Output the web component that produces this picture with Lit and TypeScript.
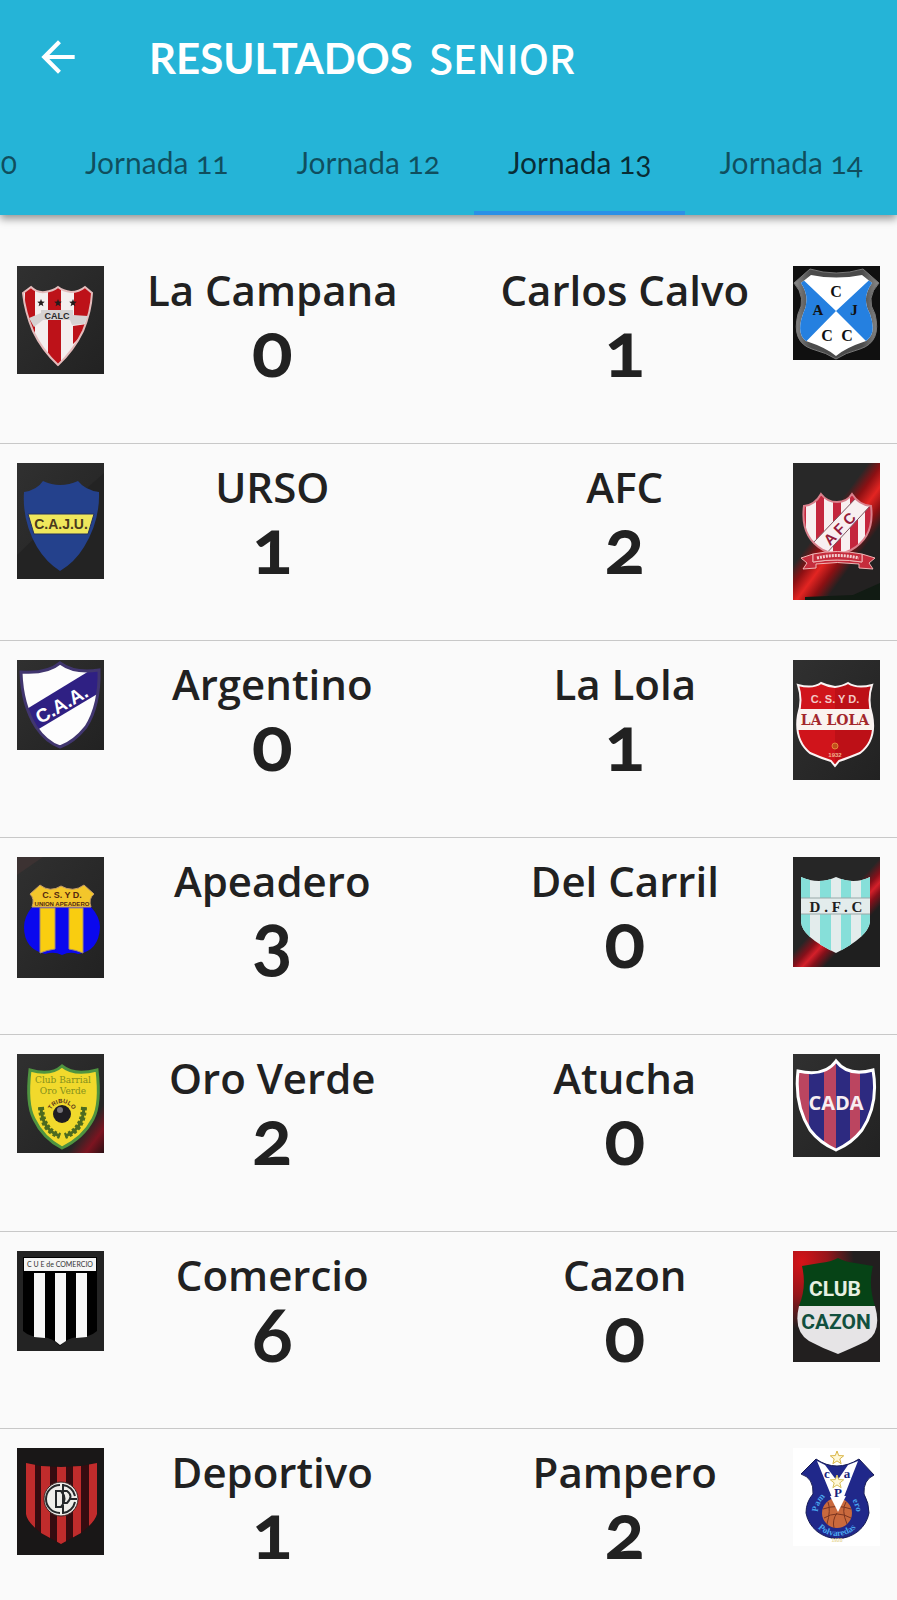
import { LitElement, html, svg, css, type SVGTemplateResult } from "lit";
import { customElement, property, state } from "lit/decorators.js";

interface Crest { height: number; art: SVGTemplateResult; }
interface Team { name: string; goals: number; crest: Crest; }

const SANS = "Liberation Sans, sans-serif";
const SERIF = "Liberation Serif, serif";

const bars = (list: number[][], fill: string, y = 0, h = 140) =>
  list.map(([x, w]) => svg`<rect x=${x} y=${y} width=${w} height=${h} fill=${fill} />`);

const label = (text: string, x: number, y: number, size: number, fill: string, family = SANS, weight = 700) =>
  svg`<text x=${x} y=${y} font-size=${size} fill=${fill} font-family=${family} font-weight=${weight} text-anchor="middle">${text}</text>`;

const backdrop = (id: string, h: number) => svg`
  <defs><linearGradient id=${id} x1="0" y1="0" x2="1" y2="1">
    <stop offset="0" stop-color="#303030" /><stop offset="1" stop-color="#222222" />
  </linearGradient></defs>
  <rect width="87" height=${h} fill="url(#${id})" />`;

const star = (cx: number, cy: number, r: number) =>
  Array.from({ length: 10 }, (_, i) => {
    const a = (i * Math.PI) / 5 - Math.PI / 2;
    const q = i % 2 ? r * 0.42 : r;
    return `${(cx + q * Math.cos(a)).toFixed(1)},${(cy + q * Math.sin(a)).toFixed(1)}`;
  }).join(" ");

const campanaShape = "M6 27 L14 21 Q20 27 28 26 Q36 25 41 21 Q46 25 54 26 Q62 26 68 21 L75 27 Q74 46 66 65 Q57 84 41 99 Q25 84 16 65 Q8 46 6 27Z";
const campana: Crest = { height: 108, art: svg`
  ${backdrop("bgCampana", 108)}
  <clipPath id="clipCampana"><path d=${campanaShape} /></clipPath>
  <g clip-path="url(#clipCampana)">
    <rect width="87" height="108" fill="#f4eeee" />
    ${bars([[8, 10], [31, 13]], "#bd1219")}
    <path d="M57 26 L68 18 L78 24 L74 50 L57 50Z M56 60 L70 58 L62 72 L56 78Z" fill="#bd1219" />
  </g>
  <path d=${campanaShape} fill="none" stroke="#e3bcbc" stroke-width="2" />
  ${[24, 41, 56].map((x) => svg`<polygon points=${star(x, 37, 4)} fill="#241c1c" />`)}
  <path d="M12 52 L24 47 L24 44 L56 44 L56 49 L71 50 L67 58 L55 59 L53 54 L26 54 L17 61Z" fill="#d6d2d2" />
  ${label("CALC", 40, 53, 9, "#28282a")}` };

const calvo: Crest = { height: 94, art: svg`
  <rect width="87" height="94" fill="#101010" />
  <linearGradient id="steel"><stop offset="0" stop-color="#8b8b8b" /><stop offset=".2" stop-color="#4b4b4b" /><stop offset=".8" stop-color="#4b4b4b" /><stop offset="1" stop-color="#8b8b8b" /></linearGradient>
  <path d="M17 3 Q43 11 70 3 L86 17 Q72 32 82 48 Q89 76 67 83 Q52 87 43 93 Q34 87 19 83 Q-2 76 5 48 Q14 32 1 17Z" fill="url(#steel)" stroke="#777" stroke-width="1" />
  <clipPath id="clipCalvo"><path d="M18 9 Q43 14 69 9 L79 17 Q68 32 77 48 Q84 68 73 75 Q52 82 43 90 Q34 82 13 75 Q3 68 10 48 Q18 32 8 17Z" /></clipPath>
  <g clip-path="url(#clipCalvo)">
    <rect width="87" height="94" fill="#ffffff" />
    <path d="M0 4 L43 45 L0 89Z M87 4 L43 45 L87 89Z" fill="#2580e0" />
  </g>
  ${label("C", 43, 31, 16, "#111", SERIF)}${label("A", 25, 49, 15, "#111", SERIF)}${label("J", 61, 49, 15, "#111", SERIF)}
  ${label("C", 34, 75, 16, "#111", SERIF)}${label("C", 54, 75, 16, "#111", SERIF)}` };

const urso: Crest = { height: 116, art: svg`
  ${backdrop("bgUrso", 116)}
  <path d="M87 10 L60 34 L0 92 L0 116 L87 116Z" fill="#232323" />
  <path d="M7 29 Q20 27 26 18 Q43 26 61 18 Q68 27 82 29 Q83 58 67 84 Q58 99 43 108 Q29 99 20 84 Q5 58 7 29Z" fill="#24418c" />
  <path d="M11 51 L77 51 L71 71 L17 71Z" fill="#efe75c" stroke="#25305a" stroke-width="1" />
  ${label("C.A.J.U.", 44, 66, 14, "#4a3a1c")}` };

const argShape = "M4 12 Q30 14 43 3 Q58 14 82 10 Q83 45 69 67 Q57 82 43 87 Q29 82 19 67 Q5 45 4 12Z";
const argentino: Crest = { height: 90, art: svg`
  ${backdrop("bgArgentino", 90)}
  <clipPath id="clipArg"><path d=${argShape} /></clipPath>
  <g clip-path="url(#clipArg)">
    <rect width="87" height="90" fill="#fdfdfd" />
    <path d="M0 55 L87 2 L87 30 L10 76Z" fill="#2f2083" />
  </g>
  <path d=${argShape} fill="none" stroke="#41366f" stroke-width="3" />
  <g transform="translate(48 50) rotate(-30)">${label("C.A.A.", 0, 0, 19, "#ffffff")}</g>` };

const afcShape = "M11 43 Q22 42 28 31 Q34 39 44 39 Q54 39 59 31 Q66 42 78 43 Q82 74 58 87 L44 93 L30 87 Q7 74 11 43Z";
const afc: Crest = { height: 137, art: svg`
  <linearGradient id="beamAfc" gradientUnits="userSpaceOnUse" x1="28" y1="64" x2="66" y2="92">
    <stop offset="0" stop-color="#282828" /><stop offset=".25" stop-color="#8c1013" /><stop offset=".5" stop-color="#e32522" /><stop offset=".75" stop-color="#8c1013" /><stop offset="1" stop-color="#232121" />
  </linearGradient>
  <rect width="87" height="137" fill="url(#beamAfc)" />
  <path d="M12 134 L60 132 L87 120 L87 137 L12 137Z" fill="#111b13" />
  <clipPath id="clipAfc"><path d=${afcShape} /></clipPath>
  <g clip-path="url(#clipAfc)">
    <rect width="87" height="137" fill="#f8eff0" />
    ${bars([[23, 8], [40, 8], [57, 8], [72, 6], [10, 3]], "#c4263d")}
    <path d="M20 80 L64 34 L77 43 L31 93Z" fill="#f8eff0" stroke="#7c5560" stroke-width="1" />
  </g>
  <path d=${afcShape} fill="none" stroke="#d9808c" stroke-width="2" />
  <g transform="translate(49 68) rotate(-46)">${label("A F C", 0, 2, 15, "#941b3b")}</g>
  <path d="M8 95 L20 91 L20 99 Q44 95 69 99 L69 91 L82 95 L76 100 L80 106 L66 105 L66 101 Q44 98 23 101 L23 105 L10 106 L14 100Z" fill="#c52c3c" stroke="#f0b5b5" stroke-width="1" />
  <path d="M20 91 Q44 86 69 91 L69 99 Q44 95 20 99Z" fill="#c52c3c" stroke="#f0b5b5" stroke-width="1" />
  <path d="M24 95 Q44 90 66 95" fill="none" stroke="#f3d0d0" stroke-width="3" stroke-dasharray="2 1" />` };

const lolaShape = "M5 25 Q20 29 28 23 Q34 26 42 27 Q50 26 55 23 Q64 29 79 25 Q74 40 79 55 Q84 80 67 93 Q55 98 46 101 L42 106 L38 101 Q28 98 17 93 Q1 80 5 55 Q10 40 5 25Z";
const lola: Crest = { height: 120, art: svg`
  ${backdrop("bgLola", 120)}
  <clipPath id="clipLola"><path d=${lolaShape} /></clipPath>
  <g clip-path="url(#clipLola)">
    <rect width="87" height="120" fill="#d0141b" /><rect x="42" width="45" height="120" fill="#bd1017" />
    <rect y="49" width="87" height="21" fill="#faf3ef" />
  </g>
  <path d=${lolaShape} fill="none" stroke="#faf3f3" stroke-width="2" />
  ${label("C. S. Y D.", 42, 43, 11, "#f3c9c6")}
  ${label("LA LOLA", 42, 65, 14, "#a3272b", "DejaVu Serif, serif")}
  <circle cx="42" cy="86" r="3" fill="#c0501c" stroke="#e5853c" stroke-width="1" />
  ${label("1932", 42, 97, 6, "#f0b48f")}` };

const apeadero: Crest = { height: 121, art: svg`
  ${backdrop("bgApeadero", 121)}
  <path d="M0 0 L26 0 L0 18Z" fill="#3c3232" />
  <path d="M15 50 L74 50 Q83 60 83 70 Q82 94 61 97 Q53 94 45 98 Q37 94 28 97 Q7 92 7 70 Q7 60 15 50Z" fill="#0a08ee" />
  <path d="M23 51 H38 V92 Q30 93 23 96Z M52 51 H66 V96 Q59 93 52 92Z" fill="#f9cd10" stroke="#a08a78" stroke-width="1" />
  <path d="M13 37 L23 28 Q33 36 44 29 Q56 36 67 28 L77 37 Q71 42 74 50 L15 50 Q18 42 13 37Z" fill="#f3c62b" stroke="#c39a66" stroke-width="1" />
  ${label("C. S. Y D.", 45, 41, 9, "#54280f")}
  ${label("UNION APEADERO", 45, 49, 6, "#54280f")}` };

const dfcShape = "M8 20 Q26 28 43 20 Q61 28 77 20 L77 65 Q75 80 43 96 Q9 80 8 65Z";
const carril: Crest = { height: 110, art: svg`
  <linearGradient id="beamDfc" gradientUnits="userSpaceOnUse" x1="42" y1="50" x2="66" y2="72">
    <stop offset="0" stop-color="#262626" /><stop offset=".3" stop-color="#86101a" /><stop offset=".5" stop-color="#d4202a" /><stop offset=".7" stop-color="#86101a" /><stop offset="1" stop-color="#1f1f1f" />
  </linearGradient>
  <rect width="87" height="110" fill="url(#beamDfc)" />
  <clipPath id="clipDfc"><path d=${dfcShape} /></clipPath>
  <g clip-path="url(#clipDfc)">
    <rect width="87" height="110" fill="#e3ecec" />
    ${bars([[8, 9], [27, 11], [48, 10], [68, 9]], "#86dfd9")}
    <rect x="7" y="41" width="71" height="16" fill="#e3ecec" stroke="#9aa8a8" stroke-width="1" />
  </g>
  ${label("D . F . C", 43, 55, 15, "#1d2020", SERIF)}` };

const oroShape = "M13 16 Q34 22 45 12 Q57 22 80 16 Q84 50 76 65 Q66 84 45 94 Q26 84 17 65 Q9 50 13 16Z";
const oro: Crest = { height: 99, art: svg`
  ${backdrop("bgOro", 99)}
  <linearGradient id="beamOro" x1=".55" y1=".55" x2="1" y2="1"><stop offset="0" stop-color="#262626" /><stop offset=".5" stop-color="#7c1420" /><stop offset="1" stop-color="#2a1014" /></linearGradient>
  <path d="M87 44 L87 99 L46 99Z" fill="url(#beamOro)" />
  <path d=${oroShape} fill="#f1d92c" stroke="#4f9440" stroke-width="3" />
  ${label("Club Barrial", 46, 29, 9, "#84901c", "DejaVu Serif, serif", 400)}
  ${label("Oro Verde", 46, 40, 9, "#84901c", "DejaVu Serif, serif", 400)}
  <path id="arcOro" d="M33 61 A12 12 0 0 1 57 61" fill="none" />
  <text font-size="6" font-weight="700" font-family=${SANS} fill="#5b3418"><textPath href="#arcOro" startOffset="50%" text-anchor="middle">TRIBULO</textPath></text>
  <circle cx="45" cy="60" r="9" fill="#1f1d22" /><circle cx="43" cy="56" r="3" fill="#77747c" />
  <path d="M24 53 Q25 76 43 82 M67 53 Q66 76 48 82" fill="none" stroke="#4c6a20" stroke-width="3" />
  <path d="M24 53 Q25 76 43 82 M67 53 Q66 76 48 82" fill="none" stroke="#4c6a20" stroke-width="6" stroke-dasharray="3 2" />` };

const cadaShape = "M5 17 Q32 23 43 7 Q55 23 80 16 Q86 50 69 76 Q59 89 43 96 Q27 89 17 76 Q1 50 5 17Z";
const atucha: Crest = { height: 103, art: svg`
  ${backdrop("bgCada", 103)}
  <clipPath id="clipCada"><path d=${cadaShape} /></clipPath>
  <g clip-path="url(#clipCada)">
    <rect width="87" height="103" fill="#2d2a80" />
    ${bars([[0, 16], [31, 12], [57, 10]], "#bb4560")}
  </g>
  <path d=${cadaShape} fill="none" stroke="#ffffff" stroke-width="3" />
  ${label("CADA", 43, 56, 20, "#f7eef2", "Open Sans, sans-serif")}` };

const comercio: Crest = { height: 100, art: svg`
  <rect width="87" height="100" fill="#232323" />
  <path d="M6 6 H80 V80 Q72 87 60 86 Q50 87 43 95 Q36 87 26 86 Q14 87 6 80Z" fill="#000000" />
  <rect x="7" y="7" width="72" height="13" fill="#f5f5f5" />
  ${label("C U E de COMERCIO", 43, 16, 7, "#333", "Lato, sans-serif", 400)}
  <path d="M17 22 H28 V87 L17 86Z M38 22 H49 V90 L43 94 L38 90Z M59 22 H70 V86 L59 87Z" fill="#f7f7f7" />` };

const cazon: Crest = { height: 111, art: svg`
  <radialGradient id="glow" cx=".1" cy=".1" r=".6"><stop offset="0" stop-color="#d61318" /><stop offset=".5" stop-color="#96161a" /><stop offset="1" stop-color="#221f1f" /></radialGradient>
  <rect width="87" height="111" fill="url(#glow)" />
  <path d="M9 15 L27 12 Q38 11 45 7 Q52 11 62 12 L80 15 Q75 34 82 55 L6 55 Q14 36 9 15Z" fill="#064316" />
  <path d="M6 55 L82 55 Q89 80 74 90 Q57 98 45 103 Q31 98 16 90 Q0 80 6 55Z" fill="#e6e4e6" />
  ${label("CLUB", 42, 45, 21, "#e6f0e2", "Roboto, sans-serif")}
  ${label("CAZON", 43, 78, 21, "#12503f", "Roboto, sans-serif")}` };

const deportivo: Crest = { height: 107, art: svg`
  <rect width="87" height="107" fill="#191717" />
  <clipPath id="clipDep"><path d="M9 15 L24 18 L44 19 L64 18 L80 15 V66 Q78 74 64 85 L44 96 L24 85 Q10 74 9 66Z" /></clipPath>
  <g clip-path="url(#clipDep)">
    <rect width="87" height="107" fill="#360c10" />
    ${bars([[9, 9], [24, 9], [40, 9], [56, 8], [72, 8]], "#c02c2c")}
  </g>
  <circle cx="44" cy="51" r="17" fill="#efeeea" stroke="#3b2322" stroke-width="1" />
  <path d="M43 37 A14 14 0 1 0 43 65 M46 65 A14 14 0 0 0 58 54 M46 37 A14 14 0 0 1 58 48 M39 43 V59 H44 Q51 51 44 43Z M46 36 V66 M46 43 H50 Q57 48 50 55 H46 M53 51 H60" fill="none" stroke="#25282a" stroke-width="2" />` };

const pampero: Crest = { height: 98, art: svg`
  <rect width="87" height="98" fill="#ffffff" />
  <path d="M8 26 L23 11 Q33 18 44 18 Q55 18 66 11 L81 27 Q70 32 71 46 Q76 55 76 65 A32 31 0 0 1 13 65 Q13 54 20 46 Q21 30 8 26Z" fill="#20288a" stroke="#171c55" stroke-width="1" />
  <path d="M24 13 L32 17 L44 33 L55 17 L65 13 L45 64Z" fill="#ffffff" />
  <circle cx="44" cy="65" r="15" fill="#c9693d" />
  <path d="M30 61 Q44 56 58 61 M44 65 Q39 72 41 80 M31 70 Q44 62 58 70 M35 54 Q38 62 34 76 M53 54 Q48 62 54 76" fill="none" stroke="#7c3520" stroke-width="1" />
  <path d="M37 48 L45 64 L53 48Z" fill="#ffffff" />
  <polygon points=${star(44, 10, 7)} fill="#fff8d8" stroke="#d9b545" stroke-width="1" />
  <polygon points=${star(44, 34, 7)} fill="#fff8d8" stroke="#d9c05a" stroke-width="1" />
  ${label("c", 34, 30, 13, "#1a237e", SERIF)}${label("a", 54, 30, 13, "#1a237e", SERIF)}${label("P", 45, 49, 13, "#1a237e", SERIF)}
  <path id="arcTop" d="M25 64 A19 19 0 0 1 63 64" fill="none" />
  <path id="arcBottom" d="M19 65 A25 23 0 0 0 69 65" fill="none" />
  <g font-size="9" font-weight="700" font-family=${SERIF} fill="#4aa6ee">
    <text><textPath href="#arcTop" startOffset="0">Pam</textPath></text>
    <text><textPath href="#arcTop" startOffset="100%" text-anchor="end">ero</textPath></text>
    <text><textPath href="#arcBottom" startOffset="50%" text-anchor="middle">Polvaredas</textPath></text>
  </g>
  ${label("1928", 44, 94, 5, "#e8d9a0")}` };

const MATCHES: [Team, Team][] = [
  [{ name: "La Campana", goals: 0, crest: campana }, { name: "Carlos Calvo", goals: 1, crest: calvo }],
  [{ name: "URSO", goals: 1, crest: urso }, { name: "AFC", goals: 2, crest: afc }],
  [{ name: "Argentino", goals: 0, crest: argentino }, { name: "La Lola", goals: 1, crest: lola }],
  [{ name: "Apeadero", goals: 3, crest: apeadero }, { name: "Del Carril", goals: 0, crest: carril }],
  [{ name: "Oro Verde", goals: 2, crest: oro }, { name: "Atucha", goals: 0, crest: atucha }],
  [{ name: "Comercio", goals: 6, crest: comercio }, { name: "Cazon", goals: 0, crest: cazon }],
  [{ name: "Deportivo", goals: 1, crest: deportivo }, { name: "Pampero", goals: 2, crest: pampero }],
];

@customElement("team-side")
class TeamSide extends LitElement {
  @property({ attribute: false }) team!: Team;
  @property({ type: Boolean, reflect: true }) away = false;

  static styles = css`
    :host { display: flex; flex: 1 1 0; min-width: 0; align-items: flex-start; }
    :host([away]) { flex-direction: row-reverse; }
    .crest { flex: none; display: block; width: 87px; }
    .info { flex: 1; min-width: 0; text-align: center; color: #212121; }
    .name { margin: 0; font: 600 42px/48px "Open Sans", sans-serif; white-space: nowrap; }
    .goals { margin: 0; font: 700 76px/68px Lato, sans-serif; font-variant-numeric: oldstyle-nums; }
  `;

  render() {
    const { name, goals, crest } = this.team;
    return html`
      <svg class="crest" viewBox="0 0 87 ${crest.height}" role="img" aria-label="Escudo ${name}">${crest.art}</svg>
      <div class="info">
        <h2 class="name">${name}</h2>
        <p class="goals">${goals}</p>
      </div>`;
  }
}

@customElement("app-root")
class AppRoot extends LitElement {
  @state() private round = 13;

  static styles = css`
    :host { display: block; min-height: 100vh; background: #fafafa; overflow: hidden; }
    .header { background: #25b4d7; box-shadow: 0 4px 8px rgba(0, 0, 0, 0.4); }
    .bar { display: flex; align-items: center; height: 114px; padding-left: 33px; gap: 66px; color: #fff; }
    .back { flex: none; display: block; width: 50px; height: 50px; padding: 0; border: 0; background: none; color: inherit; cursor: pointer; }
    .back svg { display: block; width: 100%; height: 100%; }
    .title { display: flex; align-items: baseline; gap: 16px; margin: 0; font: 700 42px/50px Lato, sans-serif; white-space: nowrap; }
    .category { font-family: "Noto Sans CJK SC", sans-serif; font-size: 40px; font-weight: 500; }
    .tabs { display: flex; justify-content: flex-end; overflow: hidden; }
    .tab {
      flex: none; padding: 0 34px; border-bottom: 4px solid transparent;
      font: 400 30px/97px Lato, sans-serif; font-variant-numeric: oldstyle-nums;
      color: rgba(0, 0, 0, 0.56); text-decoration: none; white-space: nowrap;
    }
    .tab.active { color: rgba(0, 0, 0, 0.76); border-bottom-color: #2b90e6; }
    .matches { margin: 0; padding: 32px 0 0; list-style: none; }
    .match { display: flex; gap: 16px; box-sizing: border-box; min-height: 197px; padding: 19px 17px 0; border-bottom: 1px solid #c8c8c8; }
    .match:last-child { border-bottom: 0; min-height: 0; }
  `;

  private select(e: Event, n: number) {
    e.preventDefault();
    this.round = n;
  }

  render() {
    return html`
      <header class="header">
        <div class="bar">
          <button class="back" aria-label="Volver">
            <svg viewBox="0 0 24 24" fill="currentColor"><path d="M20 11H7.83l5.59-5.59L12 4l-8 8 8 8 1.41-1.41L7.83 13H20v-2z" /></svg>
          </button>
          <h1 class="title"><span>RESULTADOS</span><span class="category">SENIOR</span></h1>
        </div>
        <nav class="tabs" aria-label="Jornadas">
          ${[10, 11, 12, 13, 14].map((n) => html`<a
            class="tab ${n === this.round ? "active" : ""}" href="#jornada-${n}"
            @click=${(e: Event) => this.select(e, n)}>Jornada ${n}</a>`)}
        </nav>
      </header>
      <ul class="matches">
        ${MATCHES.map(([home, away]) => html`<li class="match">
          <team-side .team=${home}></team-side>
          <team-side away .team=${away}></team-side>
        </li>`)}
      </ul>`;
  }
}
